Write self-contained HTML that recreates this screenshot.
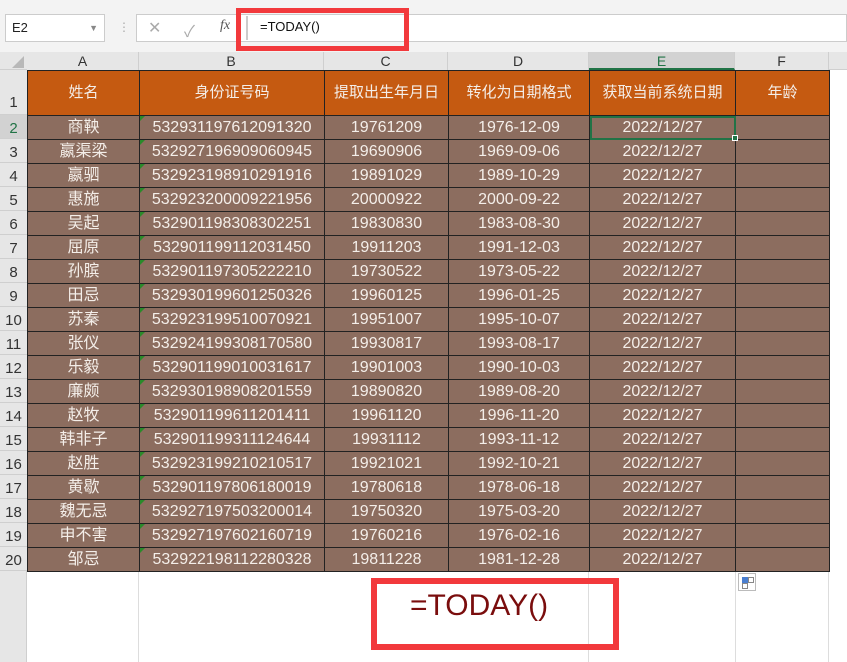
<!DOCTYPE html>
<html><head><meta charset="utf-8"><style>
body{margin:0;width:847px;height:662px;overflow:hidden;background:#fff;font-family:"Liberation Sans","Noto Sans CJK SC",sans-serif;position:relative}
.a{position:absolute;box-sizing:border-box}
table{position:absolute;left:27px;top:70px;border-collapse:collapse;table-layout:fixed}
td{border:1px solid #222;padding:0;text-align:center;color:#f4eee9;font-size:16px;white-space:nowrap;overflow:hidden;position:relative}
tr.h td{background:#C55A11;height:44px;font-size:15px;line-height:20px}
tr.d td{background:#8C6D5F;height:23px;line-height:22px;overflow:visible}
.g:before{content:"";position:absolute;left:0;top:0;border-left:5px solid #2a8a2a;border-bottom:5px solid transparent}
.rh{position:absolute;left:0;width:27px;background:#e6e6e6;color:#333;font-size:15px;text-align:center;border-bottom:1px solid #cfcfcf;box-sizing:border-box}
.ch{position:absolute;top:52px;height:18px;background:#e6e6e6;color:#333;font-size:14px;text-align:center;line-height:18px;border-right:1px solid #cfcfcf;box-sizing:border-box}
</style></head><body>
<div class="a" style="left:0;top:0;width:847px;height:52px;background:#f3f3f3"></div>
<div class="a" style="left:5px;top:14px;width:100px;height:28px;background:#fff;border:1px solid #ccc;font-size:13px;line-height:26px;padding-left:6px;color:#222">E2<span style="position:absolute;right:6px;top:0;color:#888;font-size:9px">▼</span></div>
<div class="a" style="left:118px;top:20px;color:#aaa;font-size:12px">⋮</div>
<div class="a" style="left:136px;top:14px;width:711px;height:28px;background:#fff;border:1px solid #ccc"></div>
<div class="a" style="left:148px;top:18px;color:#aaa;font-size:16px">✕</div>
<div class="a" style="left:184px;top:18px;color:#aaa;font-size:16px">✓</div>
<div class="a" style="left:220px;top:18px;color:#555;font-size:14px;font-style:italic;font-family:'Liberation Serif',serif">fx</div>
<div class="a" style="left:246px;top:16px;width:2px;height:24px;background:#ccc"></div>
<div class="a" style="left:260px;top:19px;font-size:13px;color:#111">=TODAY()</div>
<div class="a" style="left:236px;top:8px;width:173px;height:43px;border:5px solid #f2393c"></div>
<div class="a" style="left:0;top:52px;width:27px;height:610px;background:#e6e6e6;border-right:1px solid #cfcfcf"></div>
<div class="a" style="left:0;top:52px;width:847px;height:18px;background:#e6e6e6;border-bottom:1px solid #cfcfcf"></div>
<div class="a" style="left:12px;top:56px;width:0;height:0;border-left:12px solid transparent;border-bottom:12px solid #b8b8b8"></div>
<div class="ch" style="left:27px;width:112px">A</div>
<div class="ch" style="left:139px;width:185px">B</div>
<div class="ch" style="left:324px;width:124px">C</div>
<div class="ch" style="left:448px;width:141px">D</div>
<div class="ch" style="left:589px;width:146px;background:#d2d2d2;border-bottom:2px solid #217346;color:#217346">E</div>
<div class="ch" style="left:735px;width:94px">F</div>
<div class="rh" style="top:70px;height:45px;line-height:66px">1</div>
<div class="rh" style="top:115px;height:24px;line-height:28px;background:#d2d2d2;color:#217346">2</div>
<div class="rh" style="top:139px;height:24px;line-height:28px">3</div>
<div class="rh" style="top:163px;height:24px;line-height:28px">4</div>
<div class="rh" style="top:187px;height:24px;line-height:28px">5</div>
<div class="rh" style="top:211px;height:24px;line-height:28px">6</div>
<div class="rh" style="top:235px;height:24px;line-height:28px">7</div>
<div class="rh" style="top:259px;height:24px;line-height:28px">8</div>
<div class="rh" style="top:283px;height:24px;line-height:28px">9</div>
<div class="rh" style="top:307px;height:24px;line-height:28px">10</div>
<div class="rh" style="top:331px;height:24px;line-height:28px">11</div>
<div class="rh" style="top:355px;height:24px;line-height:28px">12</div>
<div class="rh" style="top:379px;height:24px;line-height:28px">13</div>
<div class="rh" style="top:403px;height:24px;line-height:28px">14</div>
<div class="rh" style="top:427px;height:24px;line-height:28px">15</div>
<div class="rh" style="top:451px;height:24px;line-height:28px">16</div>
<div class="rh" style="top:475px;height:24px;line-height:28px">17</div>
<div class="rh" style="top:499px;height:24px;line-height:28px">18</div>
<div class="rh" style="top:523px;height:24px;line-height:28px">19</div>
<div class="rh" style="top:547px;height:24px;line-height:28px">20</div>
<div class="a" style="left:138px;top:570px;width:1px;height:92px;background:#ddd"></div>
<div class="a" style="left:588px;top:570px;width:1px;height:92px;background:#ddd"></div>
<div class="a" style="left:735px;top:570px;width:1px;height:92px;background:#ddd"></div>
<div class="a" style="left:828px;top:570px;width:1px;height:92px;background:#ddd"></div>
<table>
<colgroup><col style="width:112px"><col style="width:185px"><col style="width:124px"><col style="width:141px"><col style="width:146px"><col style="width:94px"></colgroup>
<tr class="h"><td>姓名</td><td>身份证号码</td><td>提取出生年月日</td><td>转化为日期格式</td><td>获取当前系统日期</td><td>年龄</td></tr>
<tr class="d"><td>商鞅</td><td class="g">532931197612091320</td><td>19761209</td><td>1976-12-09</td><td style="outline:2px solid #217346;outline-offset:-2px">2022/12/27</td><td></td></tr>
<tr class="d"><td>嬴渠梁</td><td class="g">532927196909060945</td><td>19690906</td><td>1969-09-06</td><td>2022/12/27</td><td></td></tr>
<tr class="d"><td>嬴驷</td><td class="g">532923198910291916</td><td>19891029</td><td>1989-10-29</td><td>2022/12/27</td><td></td></tr>
<tr class="d"><td>惠施</td><td class="g">532923200009221956</td><td>20000922</td><td>2000-09-22</td><td>2022/12/27</td><td></td></tr>
<tr class="d"><td>吴起</td><td class="g">532901198308302251</td><td>19830830</td><td>1983-08-30</td><td>2022/12/27</td><td></td></tr>
<tr class="d"><td>屈原</td><td class="g">532901199112031450</td><td>19911203</td><td>1991-12-03</td><td>2022/12/27</td><td></td></tr>
<tr class="d"><td>孙膑</td><td class="g">532901197305222210</td><td>19730522</td><td>1973-05-22</td><td>2022/12/27</td><td></td></tr>
<tr class="d"><td>田忌</td><td class="g">532930199601250326</td><td>19960125</td><td>1996-01-25</td><td>2022/12/27</td><td></td></tr>
<tr class="d"><td>苏秦</td><td class="g">532923199510070921</td><td>19951007</td><td>1995-10-07</td><td>2022/12/27</td><td></td></tr>
<tr class="d"><td>张仪</td><td class="g">532924199308170580</td><td>19930817</td><td>1993-08-17</td><td>2022/12/27</td><td></td></tr>
<tr class="d"><td>乐毅</td><td class="g">532901199010031617</td><td>19901003</td><td>1990-10-03</td><td>2022/12/27</td><td></td></tr>
<tr class="d"><td>廉颇</td><td class="g">532930198908201559</td><td>19890820</td><td>1989-08-20</td><td>2022/12/27</td><td></td></tr>
<tr class="d"><td>赵牧</td><td class="g">532901199611201411</td><td>19961120</td><td>1996-11-20</td><td>2022/12/27</td><td></td></tr>
<tr class="d"><td>韩非子</td><td class="g">532901199311124644</td><td>19931112</td><td>1993-11-12</td><td>2022/12/27</td><td></td></tr>
<tr class="d"><td>赵胜</td><td class="g">532923199210210517</td><td>19921021</td><td>1992-10-21</td><td>2022/12/27</td><td></td></tr>
<tr class="d"><td>黄歇</td><td class="g">532901197806180019</td><td>19780618</td><td>1978-06-18</td><td>2022/12/27</td><td></td></tr>
<tr class="d"><td>魏无忌</td><td class="g">532927197503200014</td><td>19750320</td><td>1975-03-20</td><td>2022/12/27</td><td></td></tr>
<tr class="d"><td>申不害</td><td class="g">532927197602160719</td><td>19760216</td><td>1976-02-16</td><td>2022/12/27</td><td></td></tr>
<tr class="d"><td>邹忌</td><td class="g">532922198112280328</td><td>19811228</td><td>1981-12-28</td><td>2022/12/27</td><td></td></tr>
</table>
<div class="a" style="left:732px;top:135px;width:6px;height:6px;background:#217346;border:1px solid #fff"></div>
<div class="a" style="left:738px;top:573px;width:18px;height:18px;border:1px solid #bbb;background:#fff"><div class="a" style="left:3px;top:3px;width:7px;height:6px;background:#4a7fd0"></div><div class="a" style="left:9px;top:3px;width:6px;height:6px;border:1px solid #888"></div><div class="a" style="left:3px;top:9px;width:6px;height:6px;border:1px solid #888"></div></div>
<div class="a" style="left:371px;top:578px;width:248px;height:72px;border:6px solid #f2393c"></div>
<div class="a" style="left:410px;top:589px;font-size:30px;color:#7a0d0d">=TODAY()</div>
</body></html>
